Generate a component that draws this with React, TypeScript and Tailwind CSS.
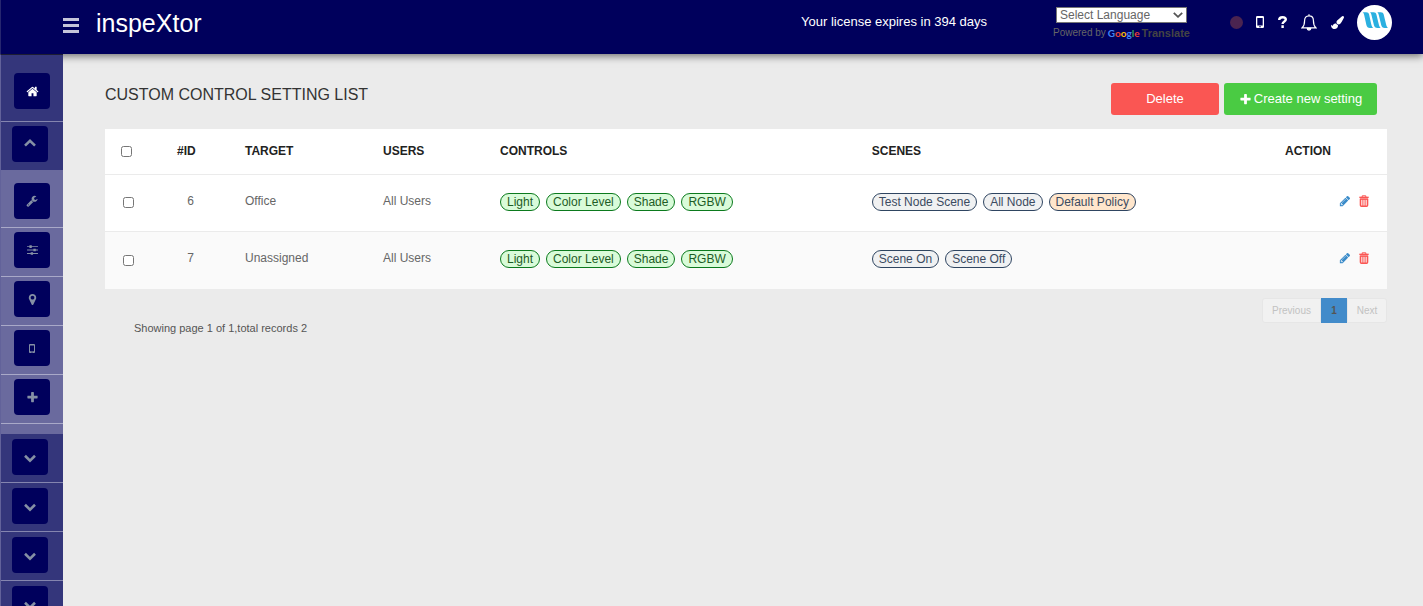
import type { ReactNode } from "react";

function Glyph({ d, className }: { d: string; className: string }) {
  return (
    <svg viewBox="0 0 1792 1792" fill="currentColor" aria-hidden="true" className={className}>
      <path d={d} />
    </svg>
  );
}

const paths = {
  home: "M1472 992v480q0 26-19 45t-45 19h-384v-384h-256v384h-384q-26 0-45-19t-19-45v-480q0-1 .5-3t.5-3l575-474 575 474q1 2 1 6zm223-69l-62 74q-8 9-21 11h-3q-13 0-21-7l-692-577-692 577q-12 8-24 7-13-2-21-11l-62-74q-8-10-7-23.5t11-21.5l719-599q32-26 76-26t76 26l244 204v-195q0-14 9-23t23-9h192q14 0 23 9t9 23v408l219 182q10 8 11 21.5t-7 23.5z",
  wrench:
    "M448 1472q0-26-19-45t-45-19-45 19-19 45 19 45 45 19 45-19 19-45zm644-420l-682 682q-37 37-90 37-52 0-91-37l-106-108q-38-36-38-90 0-53 38-91l681-681q39 98 114.5 173.5t173.5 114.5zm634-435q0 39-23 106-47 134-164.5 217.5t-258.5 83.5q-185 0-316.5-131.5t-131.5-316.5 131.5-316.5 316.5-131.5q58 0 121.5 16.5t107.5 46.5q16 11 16 28t-16 28l-293 169v224l193 107q5-3 79-48.5t135.5-81 70.5-35.5q15 0 23.5 10t8.5 25z",
  marker:
    "M1152 640q0-106-75-181t-181-75-181 75-75 181 75 181 181 75 181-75 75-181zm256 0q0 109-33 179l-364 774q-16 33-47.5 52t-67.5 19-67.5-19-46.5-52l-365-774q-33-70-33-179 0-212 150-362t362-150 362 150 150 362z",
  plus: "M1600 736v192q0 40-28 68t-68 28h-416v416q0 40-28 68t-68 28h-192q-40 0-68-28t-28-68v-416h-416q-40 0-68-28t-28-68v-192q0-40 28-68t68-28h416v-416q0-40 28-68t68-28h192q40 0 68 28t28 68v416h416q40 0 68 28t28 68z",
  pencil:
    "M491 1536l91-91-235-235-91 91v107h128v128h107zM1014 608q0-22-22-22-10 0-17 7l-542 542q-7 7-7 17 0 22 22 22 10 0 17-7l542-542q7-7 7-17zm-54-192l416 416-832 832h-416v-416zm683 96q0 53-37 90l-166 166-416-416 166-165q36-38 90-38 53 0 91 38l235 234q37 39 37 91z",
  brush:
    "M1615 0q70 0 122.5 46.5t52.5 116.5q0 63-45 151-332 629-465 752-97 91-218 91-126 0-216.5-92.5t-90.5-219.5q0-128 92-212l638-579q59-54 130-54zm-909 1034q39 76 106.5 130t150.5 76l1 71q4 213-129.5 347t-348.5 134q-123 0-218-46.5t-152.5-127.5-86.5-183-29-220q7 5 41 30t62 44.5 59 36.5 46 17q41 0 55-37 25-66 57.5-112.5t69.5-76 88-47.5 103-25.5 125-10.5z",
};

function Phone({ className }: { className: string }) {
  return (
    <svg viewBox="0 0 8 12" fill="currentColor" fillRule="evenodd" aria-hidden="true" className={className}>
      <path d="M1.2 0h5.6A1.2 1.2 0 0 1 8 1.2v9.6A1.2 1.2 0 0 1 6.8 12H1.2A1.2 1.2 0 0 1 0 10.8V1.2A1.2 1.2 0 0 1 1.2 0zM1.3 2v7.6h5.4V2zM3.2 10.3v1h1.6v-1z" />
    </svg>
  );
}

function Chevron({ up = false }: { up?: boolean }) {
  return (
    <svg viewBox="0 0 12 12" fill="none" stroke="currentColor" strokeWidth="2.6" aria-hidden="true" className="size-3">
      <path d={up ? "M1 7.6L6 2.800l5 4.800" : "M1 4.800L6 9.600l5-4.800"} />
    </svg>
  );
}

function Sliders() {
  return (
    <svg viewBox="0 0 12 11" fill="currentColor" aria-hidden="true" className="w-[11px] h-[10px]">
      <path d="M0 1.3h12v1H0zM0 5h12v1H0zM0 8.8h12v1H0zM2.6.4h2.6v2.8H2.6zM7 4.1h2.6v2.8H7zM4 7.9h2.6v2.8H4z" />
    </svg>
  );
}

function Trash() {
  return (
    <svg viewBox="0 0 10 12" fill="none" stroke="currentColor" aria-hidden="true" className="w-[10px] h-3">
      <path d="M3.2 2V.8h3.6V2" strokeWidth="1" />
      <path d="M.3 2.4h9.4" strokeWidth="1.5" />
      <path d="M1.5 4v6.3c0 .6.3.9.9.9h5.200c.6 0 .9-.3.9-.9V4" strokeWidth="1.6" />
      <path d="M1 4.100h8" strokeWidth="1.500" />
      <path d="M3.900 4.100v7M6.100 4.100v7" strokeWidth="1.100" />
    </svg>
  );
}

function NavButton({ label, children, bright = false }: { label: string; children: ReactNode; bright?: boolean }) {
  return (
    <button
      type="button"
      aria-label={label}
      className={`flex size-9 items-center justify-center rounded-[4px] bg-[#00005c] ${bright ? "text-white" : "text-[#8590a5]"}`}
    >
      {children}
    </button>
  );
}

function Sidebar() {
  const sub: [string, ReactNode][] = [
    ["Tools", <Glyph d={paths.wrench} className="size-3" />],
    ["Controls", <Sliders />],
    ["Locations", <Glyph d={paths.marker} className="size-[13px]" />],
    ["Devices", <Phone className="w-[6px] h-[9px]" />],
    ["Add", <Glyph d={paths.plus} className="size-[13px]" />],
  ];
  return (
    <nav
      aria-label="Main"
      className="relative z-20 w-[63px] shrink-0 overflow-hidden border-t border-l border-t-[#1d1d33] border-l-[#62629a] bg-[#34367b]"
    >
      <div className="border-b border-[#8485af] pt-[18px] pb-3 pl-[13px]">
        <NavButton label="Home" bright>
          <Glyph d={paths.home} className="size-[13px]" />
        </NavButton>
      </div>
      <div className="pt-1 pb-2 pl-[11px]">
        <NavButton label="Collapse settings">
          <Chevron up />
        </NavButton>
      </div>
      <div className="bg-[#6a6a9e] pt-[9px] pb-[10px]">
        {sub.map(([label, icon]) => (
          <div key={label} className="border-b border-[#a9a9c8] pt-1 pb-2 pl-[13px]">
            <NavButton label={label}>{icon}</NavButton>
          </div>
        ))}
      </div>
      {["Expand reports", "Expand schedules", "Expand users", "Expand system"].map((label) => (
        <div key={label} className="border-b border-[#8485af] pt-[5px] pb-[7px] pl-[11px]">
          <NavButton label={label}>
            <Chevron />
          </NavButton>
        </div>
      ))}
    </nav>
  );
}

function Header() {
  return (
    <header className="relative z-10 flex h-[54px] shrink-0 items-start border-l border-[#26266f] bg-[#00005c] pr-[31px] text-white shadow-[0_2px_8px_rgba(0,0,0,0.55)]">
      <button type="button" aria-label="Menu" className="mt-[18px] ml-[62px] flex flex-col gap-[3px]">
        <span className="h-[3px] w-4 bg-[#c5c5da]" />
        <span className="h-[3px] w-4 bg-[#c5c5da]" />
        <span className="h-[3px] w-4 bg-[#c5c5da]" />
      </button>
      <a href="#home" className="mt-[7px] ml-[17px] text-[25px] leading-8">
        inspeXtor
      </a>
      <p className="mt-[13px] ml-auto text-[13px] leading-[18px]">Your license expires in 394 days</p>
      <div className="mt-[7px] ml-[66px] w-[140px]">
        <div className="relative ml-[3px] w-[131px]">
          <select
            aria-label="Select Language"
            className="block h-4 w-full appearance-none border border-[#767676] bg-white pl-[3px] text-xs leading-[14px] text-[#666]"
          >
            <option>Select Language</option>
          </select>
          <svg viewBox="0 0 10 6" fill="none" stroke="#555" strokeWidth="1.8" aria-hidden="true" className="pointer-events-none absolute top-[5px] right-1 h-[6px] w-[10px]">
            <path d="M.8.8L5 4.8 9.2.8" />
          </svg>
        </div>
        <p className="mt-[3px] flex gap-[2px] text-[10px] leading-[14px] whitespace-nowrap text-[#666]">
          <span>Powered by</span>
          <span className="font-['Lato',sans-serif] font-bold">
            <span className="text-[#4285f4]">G</span>
            <span className="text-[#ea4335]">o</span>
            <span className="text-[#fbbc05]">o</span>
            <span className="text-[#4285f4]">g</span>
            <span className="text-[#34a853]">l</span>
            <span className="text-[#ea4335]">e</span>
          </span>
          <b className="text-[11px] text-[#444]">Translate</b>
        </p>
      </div>
      <div className="ml-[37px] flex h-[44px] items-center">
        <span className="size-[13px] rounded-full bg-[#4b2450]" />
        <button type="button" aria-label="Device" className="ml-[13px]">
          <Phone className="h-3 w-2" />
        </button>
        <button type="button" aria-label="Help" className="ml-[14px]">
          <svg viewBox="0 0 9 12" fill="none" stroke="currentColor" strokeWidth="2.4" aria-hidden="true" className="h-3 w-[9px]">
            <path d="M1.2 4C1.2 2 2.6 1.2 4.5 1.2S7.8 2.1 7.8 3.6C7.8 5.6 4.6 5.4 4.6 8M4.6 9.3v2.6" />
          </svg>
        </button>
        <button type="button" aria-label="Notifications" className="ml-[14px]">
          <svg viewBox="0 0 16 17" fill="none" stroke="currentColor" strokeWidth="1.2" aria-hidden="true" className="h-[17px] w-4">
            <path d="M8 1.8c3 0 4.4 2.1 4.4 4.8 0 3.9.8 5.7 2.4 7.2H1.2C2.8 12.3 3.6 10.5 3.6 6.6 3.6 3.9 5 1.8 8 1.8zM8 .3v1.5" />
            <path d="M6.2 14.3h3.6a1.8 1.8 0 0 1-3.6 0z" fill="currentColor" />
          </svg>
        </button>
        <button type="button" aria-label="Theme" className="ml-[14px]">
          <Glyph d={paths.brush} className="h-[13px] w-[13px]" />
        </button>
        <button type="button" aria-label="Account" className="ml-[13px]">
          <svg viewBox="0 0 35 35" aria-hidden="true" className="size-[35px]">
            <circle cx="17.5" cy="17.5" r="17.5" fill="#fff" />
            <g fill="#2bb0e0">
              <path d="M5.6 7.2h3.6c1.700 0 2.500.7 2.900 2.300l2.100 9.500c.4 1.900.9 3 2 4h-3.300c-2 0-3-.9-3.500-3L7.300 10.400c-.3-1.500-.7-2.500-1.700-3.200z" />
              <path d="M12.900 7.200h3.600c1.700 0 2.500.7 2.900 2.300l2.300 9.500c.4 1.900.9 3 2 4h-3.300c-2 0-3-.9-3.500-3l-2.300-9.600c-.3-1.500-.7-2.500-1.700-3.200z" />
              <path d="M20.200 7.200h3.600c1.700 0 2.500.7 2.900 2.300l2.300 9.500c.4 1.900.9 3 2 4h-3.300c-2 0-3-.9-3.500-3l-2.300-9.600c-.3-1.500-.7-2.500-1.700-3.200z" />
            </g>
          </svg>
        </button>
      </div>
    </header>
  );
}

type Tone = "green" | "gray" | "orange";

const tones: Record<Tone, string> = {
  green: "border-[#0b7a1d] bg-[#d9fbd9] text-[#1d5c26]",
  gray: "border-[#2f4561] bg-[#f0f1f2] text-[#3b4b61]",
  orange: "border-[#2f4561] bg-[#ffe6cc] text-[#3b4b61]",
};

function Tag({ tone, children }: { tone: Tone; children: ReactNode }) {
  return (
    <span className={`inline-flex h-[18px] items-center rounded-full border px-[6px] text-xs leading-4 whitespace-nowrap ${tones[tone]}`}>
      {children}
    </span>
  );
}

const controls = ["Light", "Color Level", "Shade", "RGBW"];

const rows: { id: number; target: string; scenes: [string, Tone][] }[] = [
  {
    id: 6,
    target: "Office",
    scenes: [
      ["Test Node Scene", "gray"],
      ["All Node", "gray"],
      ["Default Policy", "orange"],
    ],
  },
  {
    id: 7,
    target: "Unassigned",
    scenes: [
      ["Scene On", "gray"],
      ["Scene Off", "gray"],
    ],
  },
];

function SettingsTable() {
  return (
    <table className="mt-[14px] w-full table-fixed border-collapse bg-white text-left text-xs text-[#666]">
      <thead>
        <tr className="h-[45px] border-b border-[#ebebeb] text-[#222]">
          <th className="w-16 pl-4">
            <input type="checkbox" aria-label="Select all settings" className="block size-[11px]" />
          </th>
          <th className="w-[68px] pl-2">#ID</th>
          <th className="w-[138px] pl-2">TARGET</th>
          <th className="w-[117px] pl-2">USERS</th>
          <th className="w-[29%] pl-2">CONTROLS</th>
          <th className="pl-2">SCENES</th>
          <th className="w-[110px] pl-2">ACTION</th>
        </tr>
      </thead>
      <tbody>
        {rows.map((row) => (
          <tr key={row.id} className="h-[57px] border-b border-[#ebebeb] even:bg-[#fafafa] last:h-[58px] last:border-b-0">
            <td className="pl-[18px]">
              <input type="checkbox" aria-label={`Select setting ${row.id}`} className="block size-[11px]" />
            </td>
            <td className="pr-[43px] pb-1 text-right">{row.id}</td>
            <td className="pb-1 pl-2">{row.target}</td>
            <td className="pb-1 pl-2">All Users</td>
            <td className="pb-[2px] pl-2">
              <div className="flex gap-[6px]">
                {controls.map((name) => (
                  <Tag key={name} tone="green">
                    {name}
                  </Tag>
                ))}
              </div>
            </td>
            <td className="pb-[2px] pl-2">
              <div className="flex gap-[6px]">
                {row.scenes.map(([name, tone]) => (
                  <Tag key={name} tone={tone}>
                    {name}
                  </Tag>
                ))}
              </div>
            </td>
            <td className="pr-[18px] pb-1">
              <div className="flex justify-end gap-2">
                <button type="button" aria-label={`Edit setting ${row.id}`} className="text-[#3a8bc9]">
                  <Glyph d={paths.pencil} className="size-3" />
                </button>
                <button type="button" aria-label={`Delete setting ${row.id}`} className="text-[#fa5653]">
                  <Trash />
                </button>
              </div>
            </td>
          </tr>
        ))}
      </tbody>
    </table>
  );
}

export default function App() {
  return (
    <div className="flex h-screen flex-col overflow-hidden bg-[#ebebeb] font-['Liberation_Sans',Arial,sans-serif]">
      <Header />
      <div className="flex min-h-0 flex-1">
        <Sidebar />
        <main className="min-w-0 flex-1 overflow-auto pt-[29px] pr-9 pl-[42px]">
          <div className="flex items-start justify-between pr-[10px]">
            <h1 className="text-base leading-6 text-[#333]">CUSTOM CONTROL SETTING LIST</h1>
            <div className="flex gap-[5px] text-[13px] text-white">
              <button type="button" className="h-8 w-[108px] rounded-[3px] bg-[#fa5653]">
                Delete
              </button>
              <button type="button" className="flex h-8 w-[153px] items-center justify-center gap-[2px] rounded-[3px] bg-[#4acb43]">
                <Glyph d={paths.plus} className="size-[13px]" />
                Create new setting
              </button>
            </div>
          </div>
          <SettingsTable />
          <div className="flex items-start justify-between pt-[9px] pl-[29px]">
            <p className="mt-[22px] text-[11px] leading-4 text-[#555]">Showing page 1 of 1,total records 2</p>
            <div className="flex items-center text-[10px] leading-[15px]">
              <button type="button" disabled className="h-[25px] w-[59px] rounded-l-[3px] border border-[#e6e6e6] bg-[#f1f1f1] text-[#c2c2c2]">
                Previous
              </button>
              <button type="button" aria-current="page" className="h-[25px] w-[26px] bg-[#428bca] font-bold text-[#555]">
                1
              </button>
              <button type="button" disabled className="h-[25px] w-10 rounded-r-[3px] border border-[#e6e6e6] bg-[#f1f1f1] text-[#c2c2c2]">
                Next
              </button>
            </div>
          </div>
        </main>
      </div>
    </div>
  );
}
